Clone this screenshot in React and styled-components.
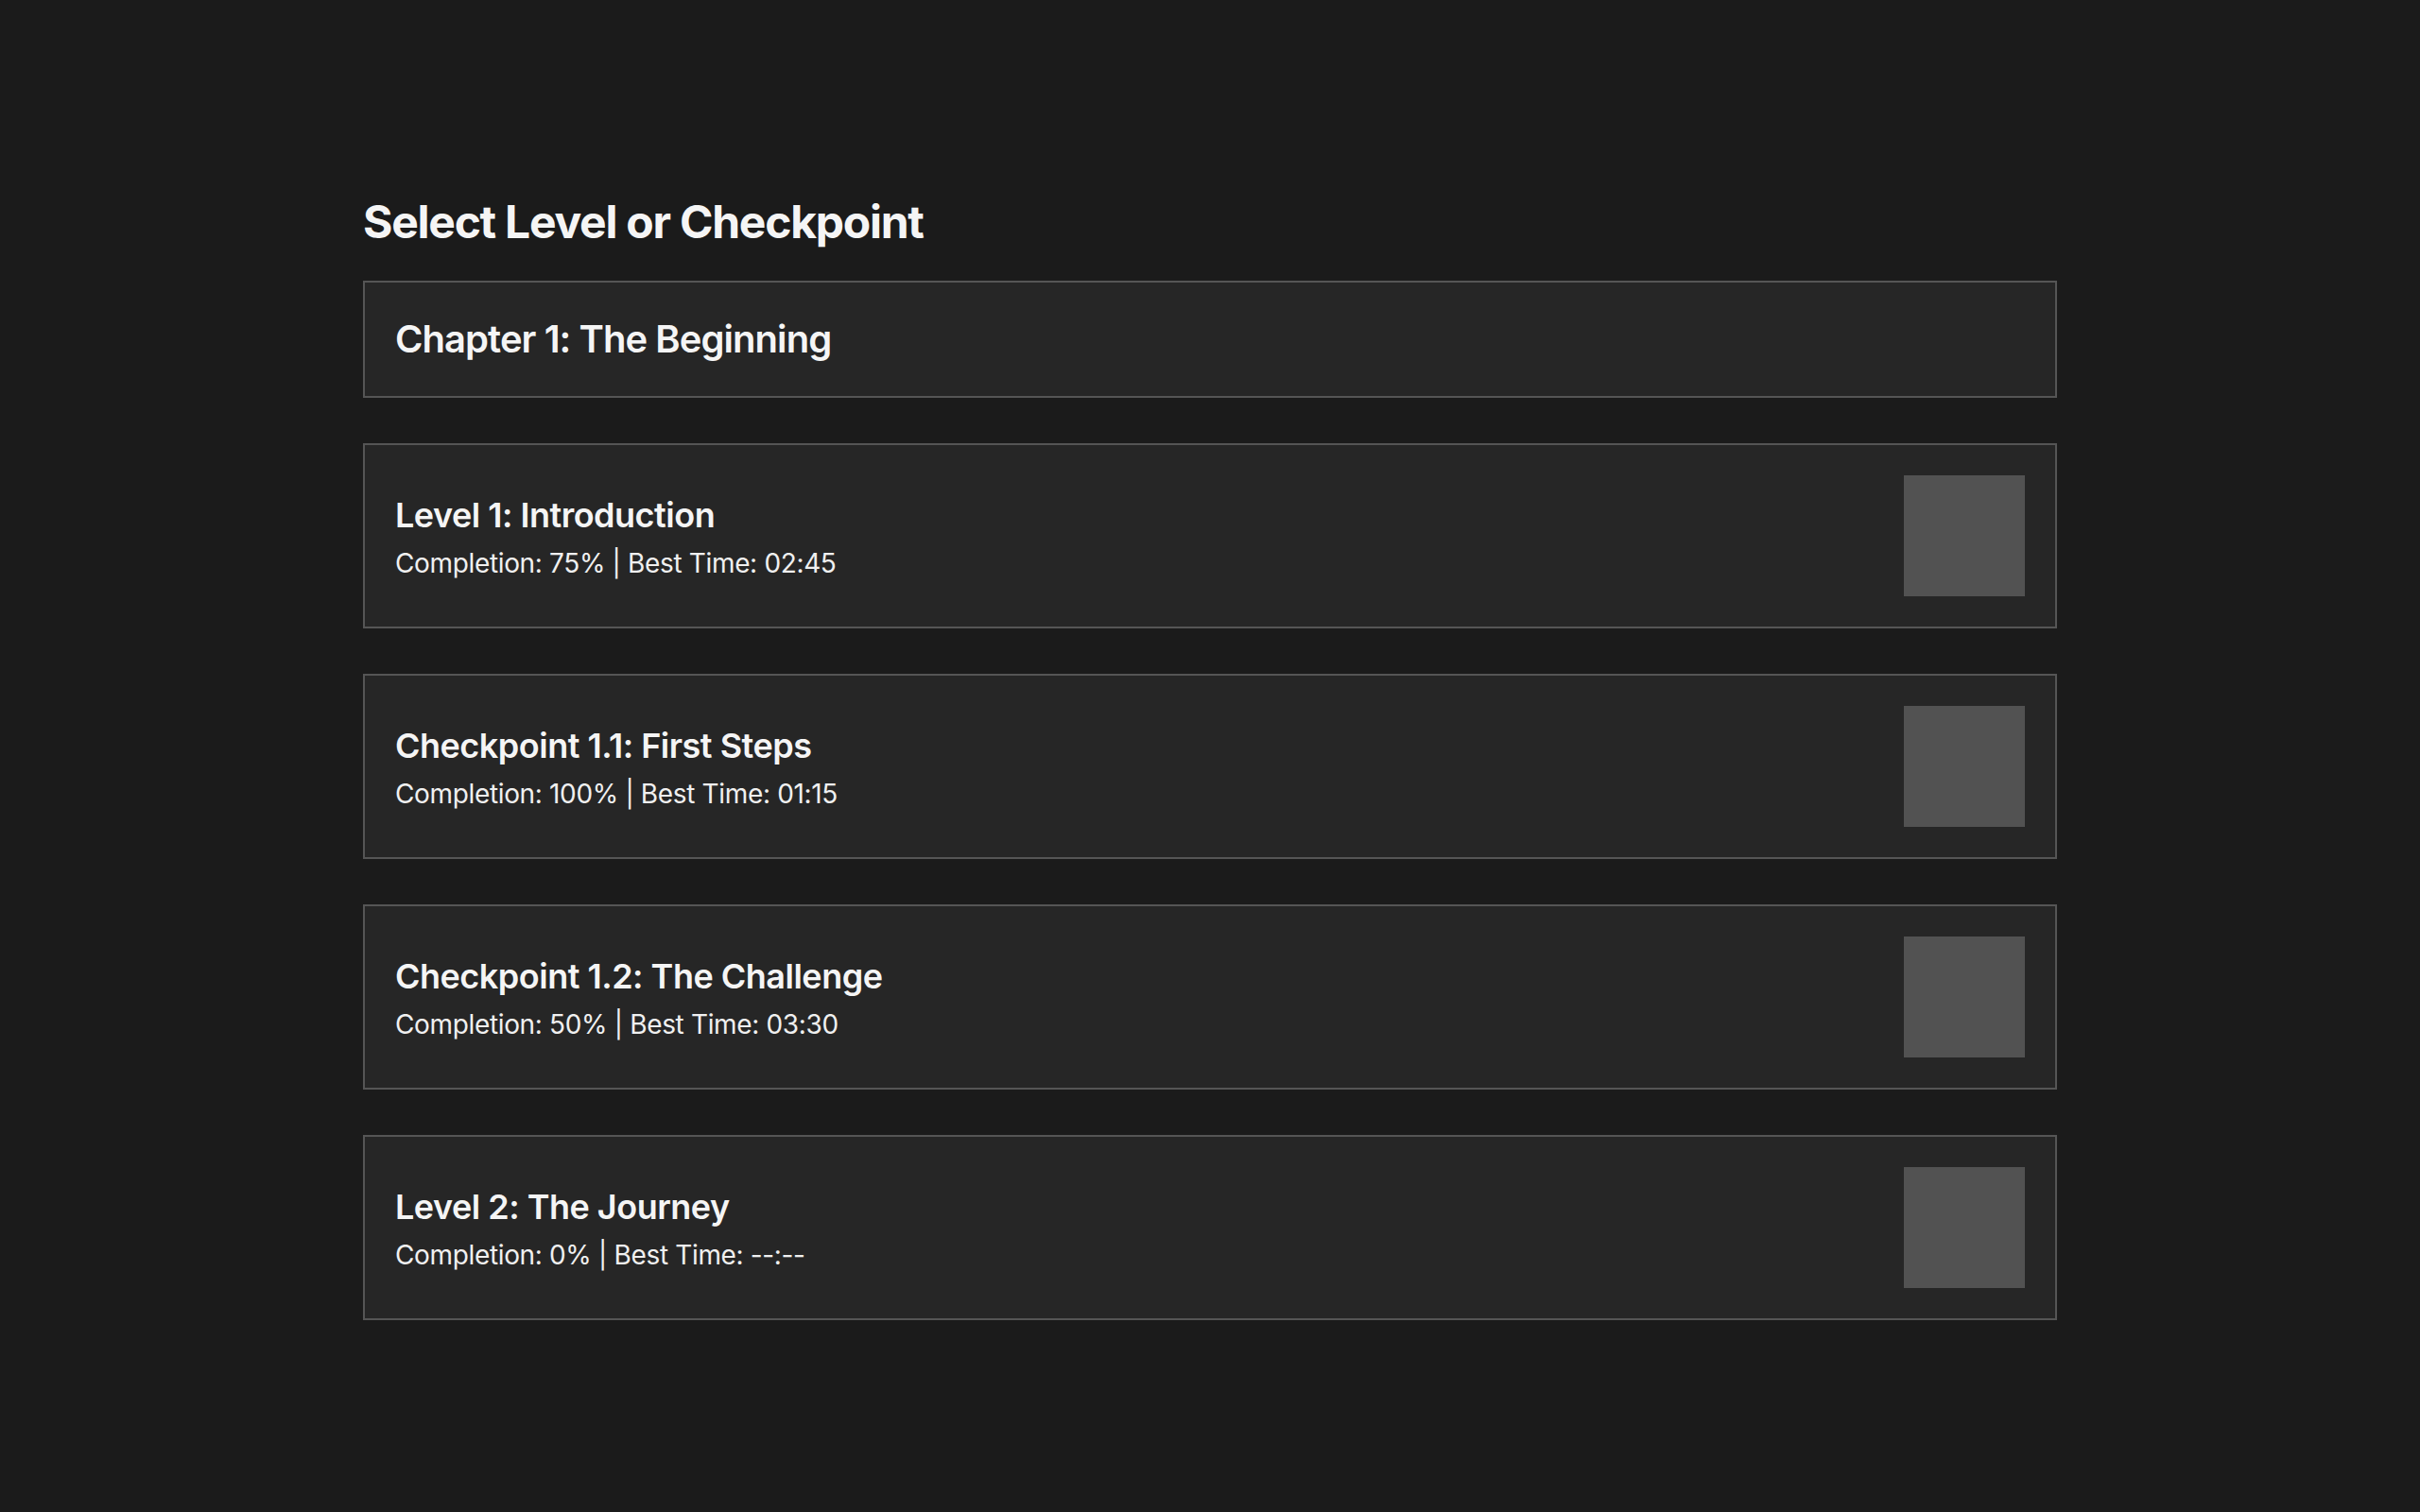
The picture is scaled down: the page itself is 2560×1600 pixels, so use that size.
import React from 'react'
import styled, {createGlobalStyle} from 'styled-components'

const levels = [
  {title: 'Level 1: Introduction', completion: '75%', best: '02:45'},
  {title: 'Checkpoint 1.1: First Steps', completion: '100%', best: '01:15'},
  {title: 'Checkpoint 1.2: The Challenge', completion: '50%', best: '03:30'},
  {title: 'Level 2: The Journey', completion: '0%', best: '--:--'}
]

const GlobalStyle = createGlobalStyle`
  html, body {
    margin: 0;
    padding: 0;
    background: #1b1b1b;
    min-height: 100%;
  }
  body {
    font-family: Inter, 'Noto Sans', 'Liberation Sans', sans-serif;
    color: #f5f5f5;
    line-height: 1.4;
  }
`

/**
 * COMPONENT
 */
const App = () => {
  return (
    <Page>
      <GlobalStyle />
      <Container>
        <Heading>Select Level or Checkpoint</Heading>
        <List>
          <ChapterCard>
            <ChapterTitle>Chapter 1: The Beginning</ChapterTitle>
          </ChapterCard>
          {levels.map(level => (
            <LevelCard key={level.title}>
              <Info>
                <LevelTitle>{level.title}</LevelTitle>
                <Stats>
                  Completion: {level.completion} | Best Time: {level.best}
                </Stats>
              </Info>
              <Thumb />
            </LevelCard>
          ))}
        </List>
      </Container>
    </Page>
  )
}

export default App

const Page = styled.div`
  min-height: 1600px;
  background: #1b1b1b;
`

const Container = styled.div`
  max-width: 1792px;
  margin: 0 auto;
  padding-top: 201px;
`

const Heading = styled.h1`
  font-size: 48px;
  font-weight: 700;
  letter-spacing: -1.25px;
  margin: 0 0 29px;
  color: #f5f5f5;
`

const List = styled.div`
  display: flex;
  flex-direction: column;
  gap: 48px;
`

const Card = styled.div`
  background: #262626;
  border: 2px solid #555555;
  padding: 32px;
`

const ChapterCard = styled(Card)``

const ChapterTitle = styled.h2`
  font-size: 40px;
  font-weight: 600;
  letter-spacing: -0.95px;
  margin: 0;
  color: #f5f5f5;
`

const LevelCard = styled(Card)`
  display: flex;
  align-items: center;
  justify-content: space-between;
`

const Info = styled.div`
  display: flex;
  flex-direction: column;
  gap: 6px;
  padding-top: 2px;
`

const LevelTitle = styled.h3`
  font-size: 36px;
  font-weight: 600;
  letter-spacing: -0.5px;
  margin: 0;
  color: #f5f5f5;
`

const Stats = styled.div`
  font-size: 28px;
  letter-spacing: -0.35px;
  color: #f0f0f0;
`

const Thumb = styled.div`
  width: 128px;
  height: 128px;
  background: #525252;
  flex-shrink: 0;
`
